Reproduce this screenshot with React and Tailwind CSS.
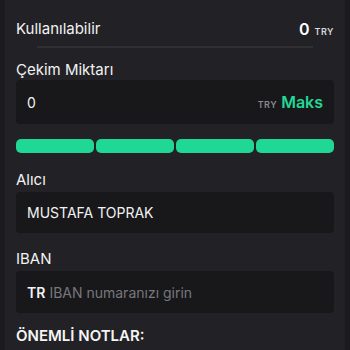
export default function App() {
  const bars = [0, 1, 2, 3];
  return (
    <div className="w-[350px] h-[350px] overflow-hidden bg-[#1b1b1f] font-['Inter',sans-serif] text-white">
      <div className="mx-[5px] h-full bg-[#222226] px-[11px]">
        {/* available balance */}
        <div className="flex items-center justify-between pt-[18px] h-[40px]">
          <span className="text-[15px] text-[#f2f2f2]">Kullanılabilir</span>
          <span className="flex items-baseline gap-[5px]">
            <span className="text-[16px] font-semibold">0</span>
            <span className="text-[9px] font-semibold tracking-[0.5px] text-[#d8d8d8]">TRY</span>
          </span>
        </div>
        <div className="mx-[21px] mt-[6px] h-[2px] bg-[#2f2f34]" />

        {/* amount */}
        <div className="mt-[12px] text-[15px] text-[#f2f2f2] leading-[20px]">Çekim Miktarı</div>
        <div className="h-[44px] rounded-[4px] bg-[#18181b] flex items-center justify-between pl-[11px] pr-[11px]">
          <span className="text-[14px] text-[#f2f2f2]">0</span>
          <span className="flex items-baseline gap-[4px]">
            <span className="text-[9px] font-semibold tracking-[0.5px] text-[#8a8a8f]">TRY</span>
            <span className="text-[16px] font-semibold text-[#22d896]">Maks</span>
          </span>
        </div>

        {/* percentage bars */}
        <div className="mt-[15px] grid grid-cols-4 gap-[2px]">
          {bars.map((b) => (
            <div key={b} className="h-[14px] rounded-[5px] bg-[#20d895]" />
          ))}
        </div>

        {/* recipient */}
        <div className="mt-[17px] text-[15px] text-[#f2f2f2] leading-[20px]">Alıcı</div>
        <div className="mt-[2px] h-[41px] rounded-[4px] bg-[#18181b] flex items-center px-[11px]">
          <span className="text-[14px] text-[#f2f2f2]">MUSTAFA TOPRAK</span>
        </div>

        {/* iban */}
        <div className="mt-[16px] text-[15px] text-[#f2f2f2] leading-[20px]">IBAN</div>
        <div className="mt-[2px] h-[42px] rounded-[4px] bg-[#18181b] flex items-center px-[11px] gap-[4px]">
          <span className="text-[14px] font-semibold text-[#f2f2f2]">TR</span>
          <span className="text-[14px] text-[#77777c]">IBAN numaranızı girin</span>
        </div>

        <div className="mt-[13px] text-[15px] font-semibold text-[#f5f5f5] leading-[20px]">ÖNEMLİ NOTLAR:</div>
      </div>
    </div>
  );
}
